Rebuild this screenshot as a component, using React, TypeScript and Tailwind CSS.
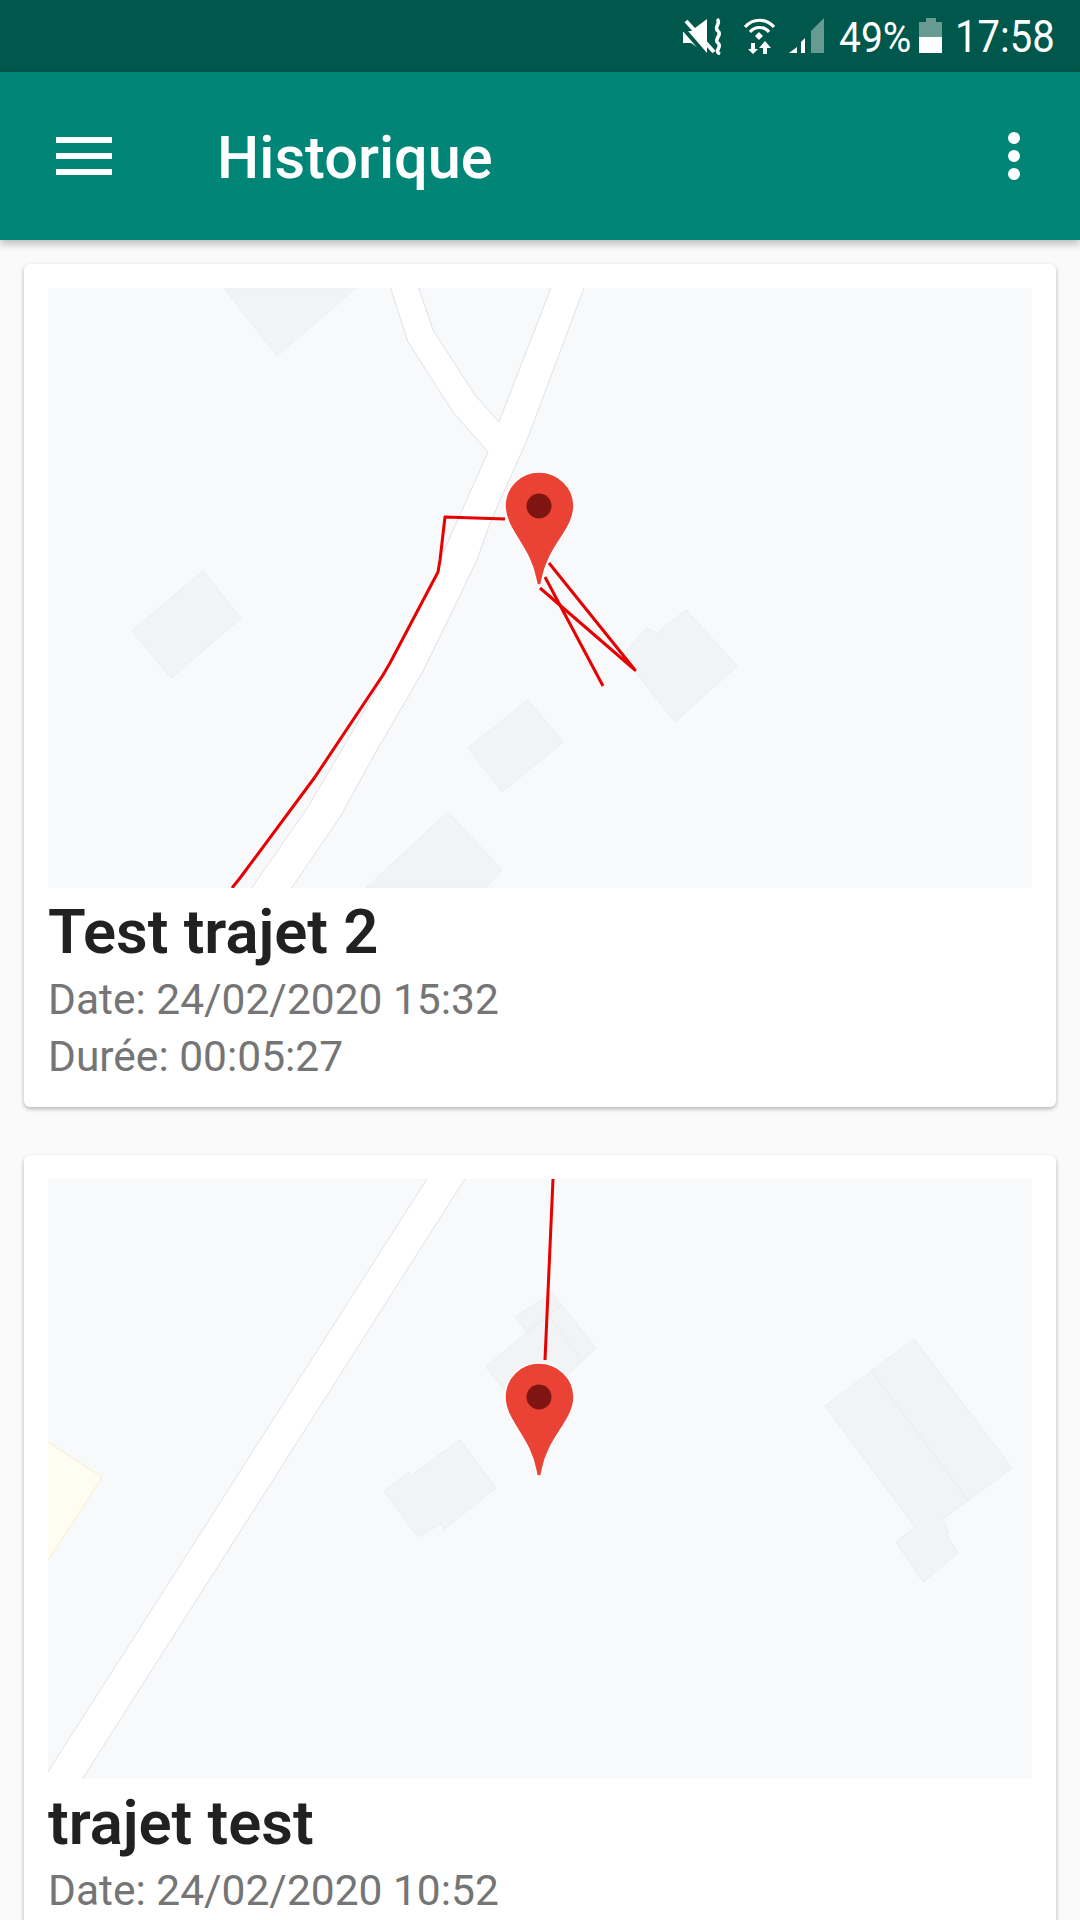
import type { ReactNode } from "react"

const BUILDING = { fill: "#f1f3f4", stroke: "#ebedef", strokeWidth: 1 }
const ROUTE = { fill: "none", stroke: "#e60000", strokeWidth: 3, strokeLinejoin: "round" as const }

function Pin({ dy = 0 }: { dy?: number }) {
  return (
    <g transform={`translate(0 ${dy})`}>
      <path
        d="M539 472C520 472 505 487 505 506C505 530 530 546 536 580L537 585L541 585L542 580C548 546 574 530 574 506C574 487 558 472 539 472Z"
        fill="#ea4335"
        stroke="#ffffff"
        strokeWidth="1.5"
      />
      <circle cx="539" cy="506" r="12.5" fill="#7f1510" />
    </g>
  )
}

function MapOne() {
  return (
    <svg viewBox="48 288 984 600" className="block w-full h-[600px] bg-[#f8f9fb]">
      <polygon points="224,288 356,288 277,356" {...BUILDING} />
      <polygon points="203,571 241,618 171,678 132,631" {...BUILDING} />
      <polygon points="528,700 563,742 502,792 468,748" {...BUILDING} />
      <polygon points="448,812 502,870 485,888 366,888" {...BUILDING} />
      <polygon points="686,610 737,666 675,722 622,655 647,628 657,633" {...BUILDING} />
      <polygon
        points="388,280 408,342 453,412 488,452 443,553 438,572 383,677 355,727 308,807 246,896 286,896 340,817 377,750 422,673 453,610 477,560 490,523 527,440 587,280 554,280 499,422 475,395 433,330 416,280"
        fill="#ffffff"
        stroke="#dfe1e5"
        strokeWidth="1"
      />
      <polyline points="232,888 240,878 315,777 383,675 390,663 438,572 440,560 445,517 505,519" {...ROUTE} />
      <polyline points="549,563 635,670 540,588" {...ROUTE} />
      <polyline points="545,577 603,686" {...ROUTE} />
      <Pin />
    </svg>
  )
}

function MapTwo() {
  return (
    <svg viewBox="48 1179 984 600" className="block w-full h-[600px] bg-[#f8f9fb]">
      <polygon points="40,1437 102,1477 40,1573" fill="#fffdf2" stroke="#f8efc8" strokeWidth="1" />
      <polygon points="914,1339 1012,1468 943,1519 949,1533 946,1534 958,1553 923,1582 896,1542 915,1527 825,1406" {...BUILDING} />
      <line x1="871" y1="1371" x2="968" y2="1500" stroke="#e9ebed" strokeWidth="1" />
      <polygon points="460,1440 496,1488 444,1529 441,1524 418,1537 384,1491 409,1472 412,1475" {...BUILDING} />
      <polygon points="552,1293 596,1348 540,1400 503,1388 486,1367 527,1332 515,1317" {...BUILDING} />
      <polyline points="527,1332 561,1305" fill="none" stroke="#e9ebed" strokeWidth="1" />
      <polyline points="550,1317 580,1358" fill="none" stroke="#e9ebed" strokeWidth="1" />
      <polygon points="432,1171 470,1171 69,1800 30,1800" fill="#ffffff" stroke="#dfe1e5" strokeWidth="1" />
      <polyline points="553,1179 545,1360" {...ROUTE} />
      <Pin dy={891} />
    </svg>
  )
}

function Card({ title, lines, map }: { title: string; lines: string[]; map: ReactNode }) {
  return (
    <div className="mx-[24px] rounded-[6px] bg-white px-[24px] pt-[24px] pb-[22px] shadow-[0_2px_4px_rgba(0,0,0,0.28)]">
      {map}
      <h2 className="mt-[6px] text-[61.5px] leading-[77px] font-semibold text-[#212121]">{title}</h2>
      {lines.map((line) => (
        <p key={line} className="text-[42.5px] leading-[57px] text-[#757575]">
          {line}
        </p>
      ))}
    </div>
  )
}

function MuteIcon() {
  return (
    <svg viewBox="683 18 40 38" className="w-[40px] h-[38px]">
      <path d="M683 32H691L707 20V55L691 44H683Z" fill="#ffffff" />
      <line x1="682" y1="28" x2="707" y2="57" stroke="#00574b" strokeWidth="4" />
      <line x1="686" y1="22" x2="714" y2="53" stroke="#ffffff" strokeWidth="4" />
      <path d="M717 20C722 24 713 28 718 32C723 36 713 40 718 44C723 48 713 52 720 55" fill="none" stroke="#ffffff" strokeWidth="3.5" />
    </svg>
  )
}

function WifiIcon() {
  return (
    <svg viewBox="743 18 33 38" className="w-[33px] h-[38px]">
      <path d="M745 28C753 19 766 19 774 28" fill="none" stroke="#ffffff" strokeWidth="3.2" />
      <path d="M750 33C755 27 764 27 769 33" fill="none" stroke="#ffffff" strokeWidth="3.2" />
      <path d="M755 37L759 33L763 37L759 41Z" fill="#ffffff" />
      <path d="M751 44H755V50H758L753 55L748 50H751Z" fill="#ffffff" />
      <path d="M763 55H767V49H771L765 42L759 49H763Z" fill="#ffffff" />
    </svg>
  )
}

function SignalIcon() {
  return (
    <svg viewBox="788 18 37 38" className="w-[37px] h-[38px]">
      <polygon points="789,54 797,48 797,54" fill="#ffffff" />
      <polygon points="801,54 801,43 805,39 805,54" fill="#ffffff" />
      <polygon points="811,54 811,32 824,19 824,54" fill="#ffffff" fillOpacity="0.4" />
    </svg>
  )
}

function BatteryIcon() {
  return (
    <svg viewBox="919 18 23 38" className="w-[23px] h-[38px]">
      <path d="M919 23H926V19H936V23H942V38H919Z" fill="#ffffff" fillOpacity="0.4" />
      <rect x="919" y="38" width="23" height="16" fill="#ffffff" />
    </svg>
  )
}

export default function App() {
  return (
    <div className="h-[1920px] overflow-hidden bg-[#fafafa] font-['Roboto',sans-serif]">
      <div className="flex h-[72px] items-center bg-[#00574b] pl-[683px] text-white">
        <MuteIcon />
        <div className="ml-[20px]">
          <WifiIcon />
        </div>
        <div className="ml-[12px]">
          <SignalIcon />
        </div>
        <span className="ml-[14px] w-[71px] translate-y-[2px] scale-y-[1.1] text-[39px] leading-[72px] whitespace-nowrap">49%</span>
        <div className="ml-[9px]">
          <BatteryIcon />
        </div>
        <span className="ml-[13px] translate-y-[2px] scale-y-[1.1] text-[40px] leading-[72px]">17:58</span>
      </div>

      <header className="relative z-10 flex h-[168px] items-center bg-[#008577] pr-[60px] pl-[56px] text-white shadow-[0_4px_8px_rgba(0,0,0,0.25)]">
        <div className="flex w-[56px] flex-col gap-[10px]">
          <span className="h-[6px] bg-white" />
          <span className="h-[6px] bg-white" />
          <span className="h-[6px] bg-white" />
        </div>
        <h1 className="ml-[105px] flex-1 pt-[6px] text-[59.5px] font-medium">Historique</h1>
        <div className="flex flex-col gap-[6px]">
          <span className="h-[12px] w-[12px] rounded-full bg-white" />
          <span className="h-[12px] w-[12px] rounded-full bg-white" />
          <span className="h-[12px] w-[12px] rounded-full bg-white" />
        </div>
      </header>

      <main className="flex flex-col gap-[48px] pt-[24px]">
        <Card title="Test trajet 2" lines={["Date: 24/02/2020 15:32", "Durée: 00:05:27"]} map={<MapOne />} />
        <Card title="trajet test" lines={["Date: 24/02/2020 10:52"]} map={<MapTwo />} />
      </main>
    </div>
  )
}
